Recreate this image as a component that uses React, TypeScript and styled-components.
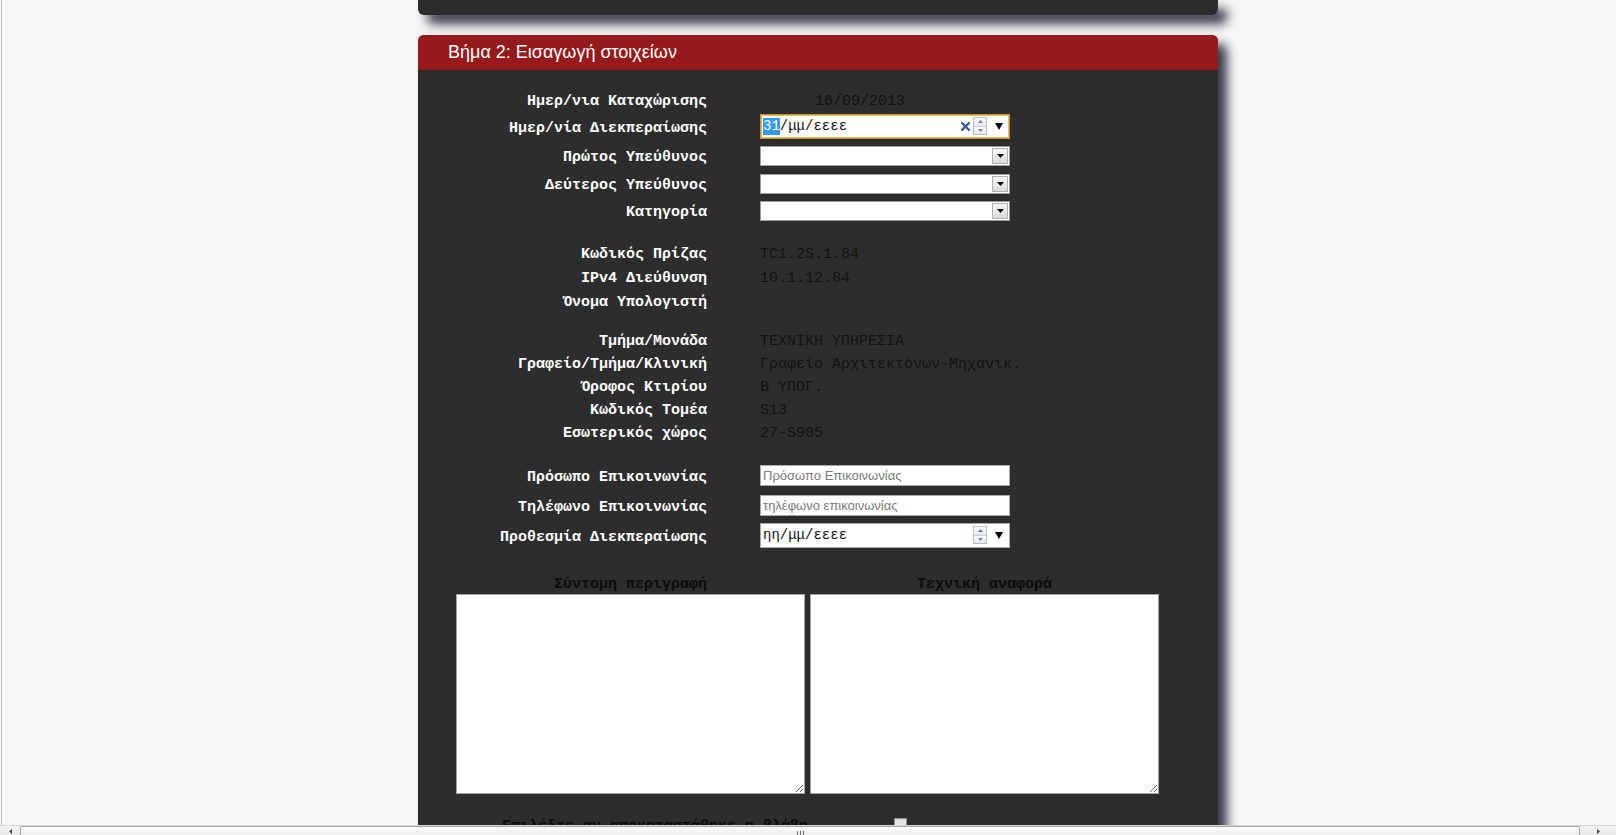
import React from 'react';
import styled, { createGlobalStyle } from 'styled-components';

const GlobalStyle = createGlobalStyle`
  html, body {
    margin: 0;
    padding: 0;
    height: 835px;
    overflow: hidden;
    background: #f7f7f7;
  }
`;

const mono = `'Liberation Mono', 'DejaVu Sans Mono', monospace`;
const sans = `'Liberation Sans', Arial, sans-serif`;

const Screen = styled.div`
  height: 835px;
  display: flex;
  flex-direction: column;
`;

const Viewport = styled.div`
  height: 825px;
  overflow: hidden;
  margin-left: 1px;
  border-left: 1px solid #c4c4c4;
  padding-left: 18px;
`;

const Column = styled.div`
  width: 800px;
  margin: 0 auto;
`;

const PrevPanel = styled.div`
  height: 15px;
  background: #2d2d2d;
  border-radius: 0 0 6px 6px;
  box-shadow: 9px 9px 11px rgba(34, 34, 56, 0.9);
`;

const Panel = styled.section`
  margin-top: 20px;
  background: #2d2d2d;
  border-radius: 6px 6px 0 0;
  box-shadow: 9px 9px 11px rgba(34, 34, 56, 0.9);
  padding-bottom: 40px;
`;

const PanelHeader = styled.h2`
  box-sizing: border-box;
  margin: 0;
  height: 35px;
  padding: 3px 0 0 30px;
  line-height: 29px;
  background: #961a1c;
  border-radius: 6px 6px 0 0;
  color: #fff;
  font-size: 18px;
  font-weight: 400;
  font-family: ${sans};
`;

const PanelBody = styled.div`
  padding-top: 16px;
`;

const Group = styled.div<{ $gap?: number }>`
  margin-top: ${(p) => p.$gap ?? 0}px;
`;

const Row = styled.div<{ $h: number }>`
  display: grid;
  grid-template-columns: 289px 250px;
  column-gap: 53px;
  align-items: center;
  height: ${(p) => p.$h}px;
`;

const Label = styled.div`
  padding-top: 4px;
  text-align: right;
  color: #fff;
  font: 700 15px ${mono};
  white-space: nowrap;
`;

const Value = styled.div<{ $indent?: number }>`
  padding-top: 4px;
  padding-left: ${(p) => p.$indent ?? 0}px;
  color: #121212;
  font: 400 15px ${mono};
  white-space: nowrap;
`;

/* date inputs */
const DateBox = styled.div<{ $focused?: boolean }>`
  display: flex;
  align-items: center;
  box-sizing: border-box;
  width: 250px;
  height: 25px;
  padding: 0 6px 0 2px;
  background: #fff;
  border: 1px solid ${(p) => (p.$focused ? '#c8912d' : '#a9a9a9')};
  box-shadow: ${(p) => (p.$focused ? 'inset 0 0 0 1px #e9bb62' : 'none')};
  font: 400 14px ${mono};
  color: #111;
`;

const DateText = styled.span`
  flex: 1;
  white-space: nowrap;
`;

const Segment = styled.span<{ $selected?: boolean }>`
  display: inline-block;
  line-height: 17px;
  background: ${(p) => (p.$selected ? '#3399ff' : 'transparent')};
  color: ${(p) => (p.$selected ? '#fff' : '#111')};
`;

const Spinner = styled.span`
  display: flex;
  flex-direction: column;
  box-sizing: border-box;
  width: 14px;
  height: 18px;
  margin-left: 3px;
  border: 1px solid #b7bfcc;
`;

const SpinHalf = styled.span`
  flex: 1;
  display: flex;
  align-items: center;
  justify-content: center;
  background: linear-gradient(#fbfbfc, #e4e8ee);
  & + & {
    border-top: 1px solid #c9cfd9;
  }
`;

const DropMark = styled.span`
  display: flex;
  margin-left: 8px;
`;

function ClearIcon() {
  return (
    <svg width="9" height="9" viewBox="0 0 9 9">
      <path d="M1 1L8 8M8 1L1 8" stroke="#3d5d98" strokeWidth="2.4" strokeLinecap="square" />
    </svg>
  );
}

function TinyTri({ up }: { up?: boolean }) {
  return (
    <svg width="5" height="3" viewBox="0 0 5 3">
      <polygon points={up ? '0,3 5,3 2.5,0' : '0,0 5,0 2.5,3'} fill="#6f84a8" />
    </svg>
  );
}

function DownTri({ w = 8, h = 7 }: { w?: number; h?: number }) {
  return (
    <svg width={w} height={h} viewBox={`0 0 ${w} ${h}`}>
      <polygon points={`0,0 ${w},0 ${w / 2},${h}`} fill="#000" />
    </svg>
  );
}

function DateField({
  parts,
  selected,
  focused,
  clearable,
}: {
  parts: string[];
  selected?: number;
  focused?: boolean;
  clearable?: boolean;
}) {
  return (
    <DateBox $focused={focused}>
      <DateText>
        {parts.map((part, i) => (
          <React.Fragment key={i}>
            {i > 0 && '/'}
            <Segment $selected={selected === i}>{part}</Segment>
          </React.Fragment>
        ))}
      </DateText>
      {clearable && <ClearIcon />}
      <Spinner>
        <SpinHalf>
          <TinyTri up />
        </SpinHalf>
        <SpinHalf>
          <TinyTri />
        </SpinHalf>
      </Spinner>
      <DropMark>
        <DownTri />
      </DropMark>
    </DateBox>
  );
}

/* selects */
const SelectWrap = styled.div`
  display: flex;
  box-sizing: border-box;
  width: 250px;
  height: 20px;
  margin-top: 1px;
  padding: 1px;
  background: #fff;
  border: 1px solid #9c9c9c;
`;

const SelectField = styled.select`
  flex: 1;
  border: 0;
  outline: none;
  appearance: none;
  background: transparent;
  font: 13px ${sans};
`;

const SelectButton = styled.span`
  display: flex;
  align-items: center;
  justify-content: center;
  box-sizing: border-box;
  width: 16px;
  border: 1px solid #b1b1b1;
  background: linear-gradient(#f7f7f7, #dadada);
`;

function SelectBox() {
  return (
    <SelectWrap>
      <SelectField defaultValue="">
        <option value="" />
      </SelectField>
      <SelectButton>
        <DownTri w={7} h={4} />
      </SelectButton>
    </SelectWrap>
  );
}

const TextInput = styled.input`
  box-sizing: border-box;
  width: 250px;
  height: 21px;
  margin: 0;
  padding: 0 2px;
  border: 1px solid #a9a9a9;
  outline: none;
  font: 13px ${sans};
  color: #111;
  &::placeholder {
    color: #7a7a7a;
  }
`;

/* notes */
const NotesGrid = styled.div`
  display: grid;
  grid-template-columns: 349px 349px;
  column-gap: 5px;
  margin: 21px 0 0 38px;
`;

const NoteColumn = styled.div`
  display: flex;
  flex-direction: column;
  align-items: center;
`;

const NoteTitle = styled.div`
  box-sizing: border-box;
  height: 23px;
  padding-top: 5px;
  line-height: 18px;
  color: #0b0b0b;
  font-size: 15px;
  font-weight: 700;
  font-family: ${mono};
`;

const NoteArea = styled.textarea`
  display: block;
  box-sizing: border-box;
  width: 100%;
  height: 200px;
  margin: 0;
  border: 1px solid #a3a3a3;
  resize: both;
  outline: none;
  background: #fff;
`;

const ResolvedRow = styled.div`
  display: flex;
  align-items: center;
  height: 28px;
  margin-top: 18px;
  padding-left: 84px;
`;

const ResolvedLabel = styled.label`
  color: #0b0b0b;
  font: 700 15px ${mono};
  white-space: nowrap;
`;

const Check = styled.input`
  appearance: none;
  box-sizing: border-box;
  width: 13px;
  height: 13px;
  margin: -4px 0 0 86px;
  border: 1px solid #8e8f8f;
  background: linear-gradient(#dcdcdc, #f6f6f6);
`;

/* bottom horizontal scrollbar */
const HScroll = styled.div`
  display: flex;
  height: 10px;
  box-sizing: border-box;
  border-top: 1px solid #d5d5d5;
  background: linear-gradient(#f3f3f3, #e9e9e9);
`;

const ScrollArrow = styled.span<{ $w: number }>`
  display: flex;
  justify-content: center;
  width: ${(p) => p.$w}px;
  padding-top: 3px;
`;

const ScrollThumb = styled.div`
  flex: 1;
  display: flex;
  justify-content: center;
  gap: 2px;
  padding-top: 4px;
  border: 1px solid #a6a6a6;
  border-bottom: 0;
  border-radius: 2px 2px 0 0;
  background: linear-gradient(#fdfdfd, #ececec);
`;

const GripLine = styled.span`
  width: 1px;
  height: 6px;
  background: #6d6d6d;
`;

const rows1 = [
  { label: 'Κωδικός Πρίζας', value: 'TC1.2S.1.84', h: 24 },
  { label: 'IPv4 Διεύθυνση', value: '10.1.12.84', h: 24 },
  { label: 'Όνομα Υπολογιστή', value: '', h: 24 },
];

const rows2 = [
  { label: 'Τμήμα/Μονάδα', value: 'ΤΕΧΝΙΚΗ ΥΠΗΡΕΣΙΑ', h: 24 },
  { label: 'Γραφείο/Τμήμα/Κλινική', value: 'Γραφείο Αρχιτεκτόνων-Μηχανικ.', h: 23 },
  { label: 'Όροφος Κτιρίου', value: 'Β ΥΠΟΓ.', h: 23 },
  { label: 'Κωδικός Τομέα', value: 'S13', h: 23 },
  { label: 'Εσωτερικός χώρος', value: '27-S905', h: 23 },
];

export default function App() {
  return (
    <Screen>
      <GlobalStyle />
      <Viewport>
        <Column>
          <PrevPanel />
          <Panel>
            <PanelHeader>Βήμα 2: Εισαγωγή στοιχείων</PanelHeader>
            <PanelBody>
              <Group>
                <Row $h={26}>
                  <Label>Ημερ/νια Καταχώρισης</Label>
                  <Value $indent={55}>16/09/2013</Value>
                </Row>
                <Row $h={28}>
                  <Label>Ημερ/νία Διεκπεραίωσης</Label>
                  <DateField parts={['31', 'μμ', 'εεεε']} selected={0} focused clearable />
                </Row>
                <Row $h={30}>
                  <Label>Πρώτος Υπεύθυνος</Label>
                  <SelectBox />
                </Row>
                <Row $h={27}>
                  <Label>Δεύτερος Υπεύθυνος</Label>
                  <SelectBox />
                </Row>
                <Row $h={27}>
                  <Label>Κατηγορία</Label>
                  <SelectBox />
                </Row>
              </Group>

              <Group $gap={16}>
                {rows1.map((r) => (
                  <Row key={r.label} $h={r.h}>
                    <Label>{r.label}</Label>
                    <Value>{r.value}</Value>
                  </Row>
                ))}
              </Group>

              <Group $gap={15}>
                {rows2.map((r) => (
                  <Row key={r.label} $h={r.h}>
                    <Label>{r.label}</Label>
                    <Value>{r.value}</Value>
                  </Row>
                ))}
              </Group>

              <Group $gap={17}>
                <Row $h={30}>
                  <Label>Πρόσωπο Επικοινωνίας</Label>
                  <TextInput placeholder="Πρόσωπο Επικοινωνίας" />
                </Row>
                <Row $h={30}>
                  <Label>Τηλέφωνο Επικοινωνίας</Label>
                  <TextInput placeholder="τηλέφωνο επικοινωνίας" />
                </Row>
                <Row $h={30}>
                  <Label>Προθεσμία Διεκπεραίωσης</Label>
                  <DateField parts={['ηη', 'μμ', 'εεεε']} />
                </Row>
              </Group>

              <NotesGrid>
                <NoteColumn>
                  <NoteTitle>Σύντομη περιγραφή</NoteTitle>
                  <NoteArea />
                </NoteColumn>
                <NoteColumn>
                  <NoteTitle>Τεχνική αναφορά</NoteTitle>
                  <NoteArea />
                </NoteColumn>
              </NotesGrid>

              <ResolvedRow>
                <ResolvedLabel>Επιλέξτε αν αποκαταστάθηκε η βλάβη</ResolvedLabel>
                <Check type="checkbox" />
              </ResolvedRow>
            </PanelBody>
          </Panel>
        </Column>
      </Viewport>
      <HScroll>
        <ScrollArrow $w={20}>
          <svg width="3" height="5" viewBox="0 0 3 5">
            <polygon points="3,0 3,5 0,2.5" fill="#444" />
          </svg>
        </ScrollArrow>
        <ScrollThumb>
          <GripLine />
          <GripLine />
          <GripLine />
        </ScrollThumb>
        <ScrollArrow $w={36}>
          <svg width="3" height="5" viewBox="0 0 3 5">
            <polygon points="0,0 0,5 3,2.5" fill="#444" />
          </svg>
        </ScrollArrow>
      </HScroll>
    </Screen>
  );
}
